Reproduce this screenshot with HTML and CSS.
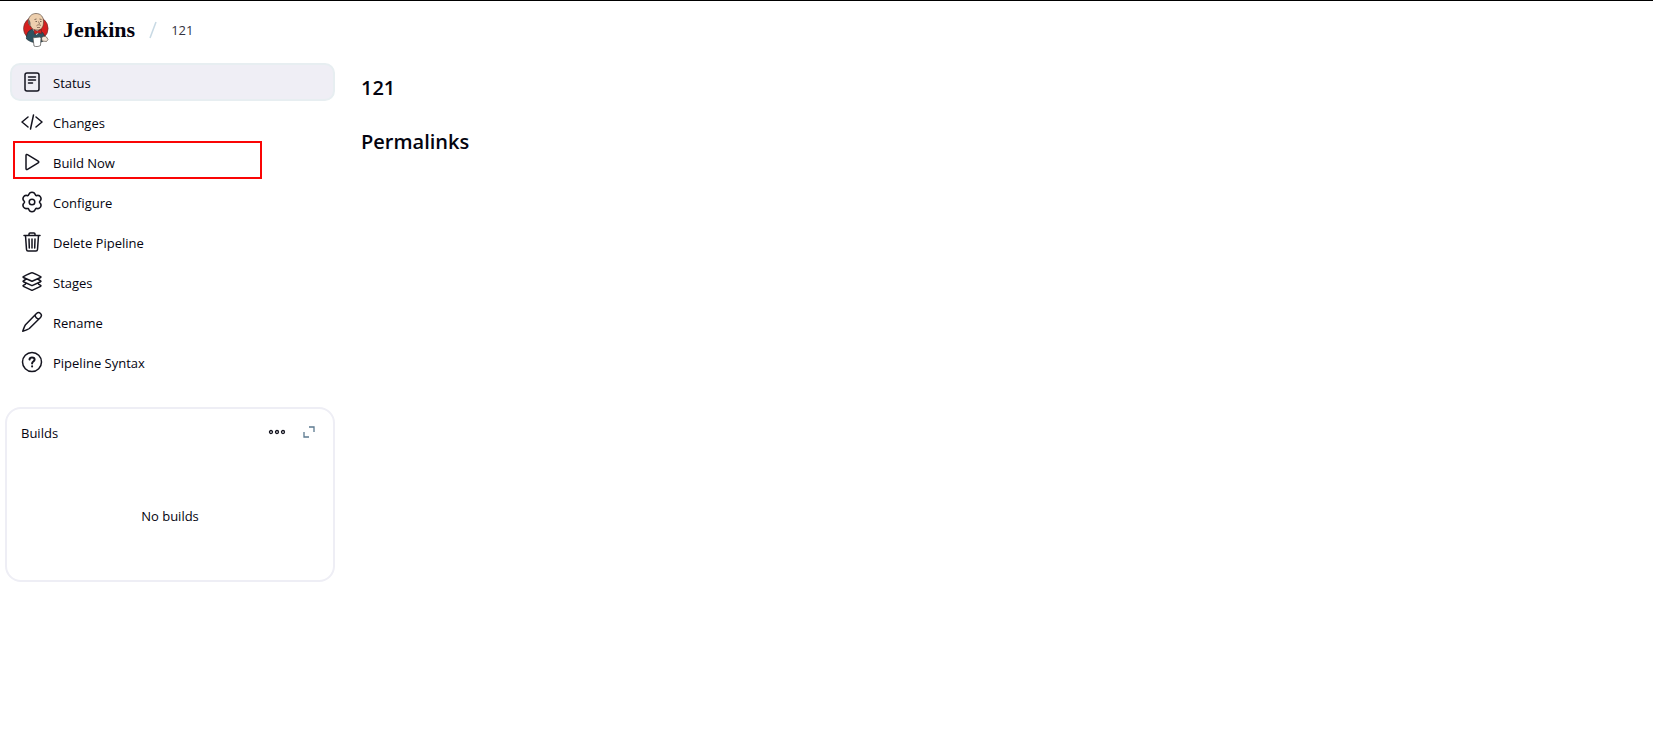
FILE: index.html
```html
<!DOCTYPE html>
<html lang="en">
<head>
  <meta charset="UTF-8" />
  <meta name="viewport" content="width=device-width, initial-scale=1" />
  <title>121 [Jenkins]</title>
  <link rel="stylesheet" href="styles.css">
</head>
<body>
  <header class="page-header">
    <a class="brand" href="#">
      <svg class="logo" viewBox="0 0 26 34" aria-hidden="true">
        <ellipse cx="12.800" cy="15.500" rx="12.300" ry="12" fill="#d5201f" stroke="#5c3433" stroke-width=".6" />
        <path d="M3.500 26c-.5-4.500 1.500-8 5-9.500l9 1.500c3.500 2 4.500 5 4 9-4 4-13 3.500-18-1z" fill="#2f5361" stroke="#1c2f38" stroke-width=".7" />
        <path d="M9.500 16l4 6 4-4z" fill="#f6f4f0" />
        <path d="M5.500 6.500C6.500 2.500 9.500.5 13 .5c5 0 7.500 3.500 7.500 8 0 4.500-1 7.500-5 8.500-4 .5-7-1-8-4-2-1-2.500-4-2-6.500z" fill="#edcfae" stroke="#4a3a31" stroke-width=".6" />
        <path d="M5.500 6c1 1 2 2.500 2 4.500v2.500c-2-1.500-2.800-4.500-2-7z" fill="#6c6560" />
        <path d="M11.500 6.500l2-.5M16.500 6l2 .5M12.500 8.500h1.500M17 8.500h1.500" stroke="#4a3a31" stroke-width=".7" fill="none" />
        <path d="M15.500 8.500l1 2.500M13.500 12.800c1.500-1.300 3-1.300 4.500-.3M14 14.500h3" stroke="#79604f" stroke-width=".8" fill="none" />
        <path d="M11 17l3.500 1.200 4-1.700v4l-3.500-.7-3.500 1.400z" fill="#d5201f" stroke="#6d1e1d" stroke-width=".6" />
        <path d="M10 24.800l7-.8 1 1-.5 7.500c-2 1.300-5 1.300-6.500.5z" fill="#fff" stroke="#4a4a4a" stroke-width=".7" />
        <path d="M18.500 25c1.500-2 3.500-2 5-1l1.500 2.500-1.500 2-4.500-.5z" fill="#f3e6d8" stroke="#4a3a31" stroke-width=".6" />
      </svg>
      <span class="brand-name">Jenkins</span>
    </a>
    <svg class="divider" viewBox="0 0 8 18" aria-hidden="true"><path d="M7 1L1 17" /></svg>
    <a class="crumb" href="#">121</a>
  </header>

  <div class="page-body">
    <aside class="side-panel">
      <nav class="tasks">
        <a class="task task-active" href="#">
          <svg class="icon" viewBox="0 0 22 22" aria-hidden="true">
            <rect x="4" y="2" width="14" height="18" rx="2" />
            <path d="M7.500 6h7M7.500 9h7M7.500 12h4" />
          </svg>
          <span class="task-label">Status</span>
        </a>
        <a class="task" href="#">
          <svg class="icon" viewBox="0 0 22 22" aria-hidden="true">
            <path d="M7 6l-6 5 6 5M15 6l6 5-6 5M12.500 4l-3 14" />
          </svg>
          <span class="task-label">Changes</span>
        </a>
        <a class="task task-marked" href="#">
          <svg class="icon" viewBox="0 0 22 22" aria-hidden="true">
            <path d="M5 4.500v13c0 1 .7 1.300 1.500.9l10.700-6.500c.8-.5.800-1.300 0-1.800L6.500 3.600C5.700 3.200 5 3.500 5 4.500z" />
          </svg>
          <span class="task-label">Build Now</span>
        </a>
        <a class="task" href="#">
          <svg class="icon" viewBox="0 0 22 22" aria-hidden="true">
            <circle cx="11" cy="11" r="2.800" />
            <path d="M7.800 3.600C8.200 2 9.300 1.200 11 1.200s2.800.8 3.200 2.400c.3.900.9 1.200 1.800.9 1.600-.4 2.800.2 3.600 1.600.8 1.500.6 2.800-.6 3.900-.7.700-.7 1.300 0 2 1.200 1.100 1.400 2.400.6 3.900-.8 1.400-2 2-3.600 1.600-.9-.3-1.500 0-1.800.9-.4 1.600-1.500 2.400-3.200 2.400s-2.800-.8-3.200-2.400c-.3-.9-.9-1.200-1.800-.9-1.600.4-2.800-.2-3.600-1.600-.8-1.500-.6-2.800.6-3.900.7-.7.700-1.300 0-2-1.200-1.100-1.400-2.400-.6-3.900.8-1.400 2-2 3.600-1.600.9.300 1.500 0 1.800-.9z" />
          </svg>
          <span class="task-label">Configure</span>
        </a>
        <a class="task" href="#">
          <svg class="icon" viewBox="0 0 22 22" aria-hidden="true">
            <path d="M3 4.500h16M4.500 4.500l1 14c.1 1 .7 1.500 1.500 1.500h8c.8 0 1.400-.5 1.500-1.500l1-14M8 4.500V3c0-.7.400-1 1-1h4c.6 0 1 .3 1 1v1.500M11 8v9M8 8l.3 9M14 8l-.3 9" />
          </svg>
          <span class="task-label">Delete Pipeline</span>
        </a>
        <a class="task" href="#">
          <svg class="icon" viewBox="0 0 22 22" aria-hidden="true">
            <path d="M11 1.800c.6 0 5.500 2.200 8.600 3.800.5.300.5.600 0 .9L11.600 10c-.4.200-.8.200-1.200 0L2.400 6.500c-.5-.3-.5-.6 0-.9C5.500 4 10.400 1.800 11 1.800zM4.500 8.500l-2.100 1.300c-.5.300-.5.600 0 .9l8 3.700c.4.200.8.200 1.200 0l8-3.700c.5-.3.500-.6 0-.9l-2.100-1.300M4.500 13.200l-2.100 1.200c-.5.300-.5.600 0 .9l8 3.900c.4.200.8.200 1.200 0l8-3.900c.5-.3.500-.6 0-.9l-2.100-1.200" />
          </svg>
          <span class="task-label">Stages</span>
        </a>
        <a class="task" href="#">
          <svg class="icon" viewBox="0 0 22 22" aria-hidden="true">
            <path d="M15.500 2.500l-11 11.200c-1 1.300-1.900 4.100-2.700 6.500 2.400-.8 5.200-1.700 6.500-2.700L19.500 6.500c2.500-3-1.200-6.500-4-4zM14 4c.3 2 1.800 3.700 4 4" />
          </svg>
          <span class="task-label">Rename</span>
        </a>
        <a class="task" href="#">
          <svg class="icon" viewBox="0 0 22 22" aria-hidden="true">
            <circle cx="11" cy="11" r="9.500" />
            <path class="bold" d="M8.500 8.500c.2-1.500 1.200-2 2.500-2 1.500 0 2.600.8 2.600 2.100 0 2-2.500 1.900-2.500 3.900M11.100 15.300v.2" />
          </svg>
          <span class="task-label">Pipeline Syntax</span>
        </a>
      </nav>

      <section class="builds">
        <div class="builds-header">
          <h2 class="builds-title">Builds</h2>
          <button class="icon-button" type="button" aria-label="More actions">
            <svg class="small-icon" viewBox="0 0 18 18" aria-hidden="true">
              <circle cx="3" cy="9" r="1.500" /><circle cx="9" cy="9" r="1.500" /><circle cx="15" cy="9" r="1.500" />
            </svg>
          </button>
          <button class="icon-button icon-button-muted" type="button" aria-label="Expand">
            <svg class="small-icon" viewBox="0 0 18 18" aria-hidden="true">
              <path d="M9 4h5v5M4 9v5h5" />
            </svg>
          </button>
        </div>
        <p class="builds-empty">No builds</p>
      </section>
    </aside>

    <main class="main-panel">
      <h1>121</h1>
      <h2>Permalinks</h2>
    </main>
  </div>
</body>
</html>
```

FILE: styles.css
```css
*, *::before, *::after {
  box-sizing: border-box;
}

body {
  margin: 0;
  min-height: 100vh;
  border-top: 1px solid #000;
  background: #fff;
  color: #04040f;
  font-family: "Segoe UI", "Open Sans", "Noto Sans", sans-serif;
  font-size: 13px;
  line-height: 20px;
}

a {
  color: inherit;
  text-decoration: none;
}

h1, h2, p {
  margin: 0;
}

/* Header with logo and breadcrumb */
.page-header {
  display: flex;
  align-items: center;
  gap: 14px;
  height: 60px;
  padding: 0 0 2px 23px;
}

.brand {
  display: flex;
  align-items: center;
  gap: 14px;
}

.logo {
  width: 26px;
  height: 34px;
}

.brand-name {
  font-family: Georgia, "Liberation Serif", serif;
  font-size: 22px;
  font-weight: bold;
}

.divider {
  width: 8px;
  height: 18px;
  fill: none;
  stroke: #c8d9e4;
  stroke-width: 1.5;
}

.crumb {
  color: #33333f;
}

/* Side panel */
.page-body {
  display: grid;
  grid-template-columns: 335px 1fr;
}

.side-panel {
  padding: 2px 0 0 5px;
}

.tasks {
  display: flex;
  flex-direction: column;
  gap: 2px;
  padding-left: 5px;
  margin-bottom: 26px;
}

.task {
  position: relative;
  display: flex;
  align-items: center;
  gap: 10px;
  height: 38px;
  padding: 0 11px;
  border-radius: 10px;
}

.task-active {
  background: #efeef5;
  border: 2px solid #e7eef1;
  padding: 0 9px;
}

.task-label {
  padding-top: 2px;
}

/* Red frame round the highlighted task */
.task-marked::after {
  content: "";
  position: absolute;
  top: -2px;
  left: 3px;
  width: 249px;
  height: 38px;
  border: 2px solid #fa0505;
}

.icon {
  width: 22px;
  height: 22px;
  fill: none;
  stroke: #14141f;
  stroke-width: 1.5;
  stroke-linecap: round;
  stroke-linejoin: round;
}

.bold {
  stroke-width: 2;
}

/* Builds card */
.builds {
  display: flex;
  flex-direction: column;
  min-height: 175px;
  border: 2px solid #eeeef5;
  border-radius: 16px;
}

.builds-header {
  display: flex;
  align-items: center;
  gap: 4px;
  padding: 9px 10px 0 14px;
}

.builds-title {
  flex: 1;
  padding-top: 2px;
  font-size: 13px;
  font-weight: normal;
}

.icon-button {
  display: flex;
  align-items: center;
  justify-content: center;
  width: 28px;
  height: 28px;
  padding: 0;
  border: 0;
  background: none;
  color: #14141f;
}

.icon-button-muted {
  color: #5c7a90;
}

.small-icon {
  width: 18px;
  height: 18px;
  fill: none;
  stroke: currentColor;
  stroke-width: 1.3;
}

.builds-empty {
  display: flex;
  flex: 1;
  align-items: center;
  justify-content: center;
  padding-top: 6px;
}

/* Main content */
.main-panel {
  padding: 12px 26px;
}

.main-panel h1,
.main-panel h2 {
  font-size: 20px;
  font-weight: 600;
  line-height: 30px;
}

.main-panel h1 {
  margin-bottom: 24px;
}
```
